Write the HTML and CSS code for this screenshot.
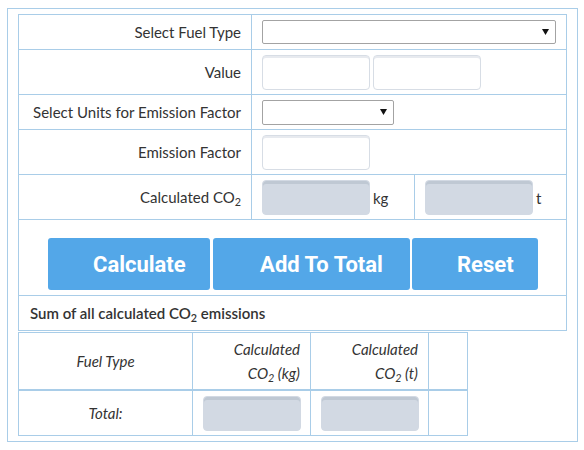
FILE: index.html
```html
<!DOCTYPE html>
<html>
<head>
<meta charset="utf-8">
<link rel="stylesheet" href="styles.css">
</head>
<body>
<div class="wrap">
  <table class="form">
    <colgroup><col class="c-label"><col class="c-a"><col class="c-b"></colgroup>
    <tr class="short">
      <th>Select Fuel Type</th>
      <td colspan="2"><div class="select fuel"><svg class="arrow" width="7" height="6" viewBox="0 0 7 6"><path d="M0 0H7L3.5 6Z" fill="#111"/></svg></div></td>
    </tr>
    <tr class="tall">
      <th>Value</th>
      <td colspan="2"><div class="pair"><span class="field"></span><span class="field"></span></div></td>
    </tr>
    <tr class="short">
      <th>Select Units for Emission Factor</th>
      <td colspan="2"><div class="select units"><svg class="arrow" width="7" height="6" viewBox="0 0 7 6"><path d="M0 0H7L3.5 6Z" fill="#111"/></svg></div></td>
    </tr>
    <tr class="tall">
      <th>Emission Factor</th>
      <td colspan="2"><span class="field"></span></td>
    </tr>
    <tr class="tall">
      <th>Calculated CO<sub>2</sub></th>
      <td><div class="out-unit"><span class="field ro"></span><span class="unit">kg</span></div></td>
      <td><div class="out-unit"><span class="field ro"></span><span class="unit">t</span></div></td>
    </tr>
    <tr>
      <td colspan="3" class="buttons">
        <div class="btn-row">
          <button class="btn btn-calc">Calculate</button>
          <button class="btn btn-add">Add To Total</button>
          <button class="btn btn-reset">Reset</button>
        </div>
      </td>
    </tr>
    <tr class="short">
      <td colspan="3" class="summary">Sum of all calculated CO<sub>2</sub> emissions</td>
    </tr>
  </table>
  <table class="totals">
    <colgroup><col class="t1"><col class="t2"><col class="t3"><col class="t4"></colgroup>
    <tr class="head">
      <th class="center">Fuel Type</th>
      <th class="right">Calculated<br>CO<sub>2</sub> (kg)</th>
      <th class="right">Calculated<br>CO<sub>2</sub> (t)</th>
      <th></th>
    </tr>
    <tr class="total">
      <td class="center">Total:</td>
      <td><span class="field ro small"></span></td>
      <td><span class="field ro small"></span></td>
      <td></td>
    </tr>
  </table>
</div>
</body>
</html>
```
FILE: styles.css
```css
html, body {
  margin: 0;
  padding: 0;
  background: #fff;
}
body {
  padding: 8px 0 0 7px;
  font-family: Lato, "Noto Sans", sans-serif;
  font-size: 15px;
  line-height: 18px;
  color: #333;
}
.wrap {
  width: 549px;
  border: 1px solid #a9cde8;
  padding: 5px 10px 5px 10px;
}
table {
  border-collapse: collapse;
  table-layout: fixed;
}
.form {
  width: 549px;
}
.c-label { width: 233px; }
.c-a { width: 163px; }
.form th, .form td {
  border: 1px solid #a9cde8;
  padding: 0 0 0 10px;
  vertical-align: middle;
}
.form th {
  text-align: right;
  font-weight: normal;
  padding: 0 10px 0 0;
  white-space: nowrap;
}
.short > th, .short > td { height: 34px; }
.tall > th, .tall > td { height: 44px; }
sub {
  font-size: 0.72em;
  vertical-align: baseline;
  position: relative;
  top: 0.3em;
  line-height: 0;
}
.select {
  box-sizing: border-box;
  display: flex;
  align-items: center;
  justify-content: flex-end;
  border: 1px solid #a3a3a3;
  border-radius: 2px;
  background: #fff;
  padding-right: 6px;
}
.select.fuel { width: 294px; height: 24px; }
.select.units { width: 132px; height: 25px; }
.arrow { display: block; }
.pair { display: flex; gap: 3px; }
.field {
  box-sizing: border-box;
  display: block;
  width: 108px;
  height: 35px;
  border: 1px solid #d7dde5;
  border-radius: 4px;
  box-shadow: inset 0 2px 0 #e7eaef;
  background: #fff;
}
.field.ro {
  background: #d2d9e3;
  border-color: #d2d9e3;
  box-shadow: inset 0 3px 0 #bfc8d3;
}
.field.small { width: 98px; }
.out-unit {
  display: flex;
  align-items: center;
  gap: 3px;
}
.unit { padding-top: 1px; }
.form td.buttons {
  height: 52px;
  padding: 18px 0 5px 0;
}
.btn-row {
  display: flex;
  justify-content: center;
  padding-left: 1px;
}
.btn {
  box-sizing: border-box;
  font-family: Roboto, "Liberation Sans", sans-serif;
  font-weight: 700;
  font-size: 22px;
  color: #fff;
  background: #53a7e8;
  border: none;
  border-radius: 3px;
  height: 52px;
  padding: 0 25px 0 45px;
  text-align: center;
  white-space: nowrap;
  cursor: pointer;
}
.btn-calc { width: 162px; }
.btn-add { width: 197px; margin-left: 3px; }
.btn-reset { width: 126px; margin-left: 2px; }
.form td.summary {
  padding-left: 11px;
  font-weight: 600;
  color: #333;
}
.totals {
  width: 450px;
  margin-top: 1px;
}
.t1 { width: 174px; }
.t2 { width: 118px; }
.t3 { width: 118px; }
.totals th, .totals td {
  border: 1px solid #a9cde8;
  padding: 0;
  vertical-align: middle;
  font-style: italic;
  font-weight: normal;
}
.totals .head > th {
  height: 56px;
  line-height: 24px;
  border-bottom-width: 2px;
}
.totals .total > td { height: 44px; }
.totals .total > td:nth-child(2),
.totals .total > td:nth-child(3) { padding-left: 10px; }
.center { text-align: center; }
.right { text-align: right; padding-right: 10px !important; }
```
